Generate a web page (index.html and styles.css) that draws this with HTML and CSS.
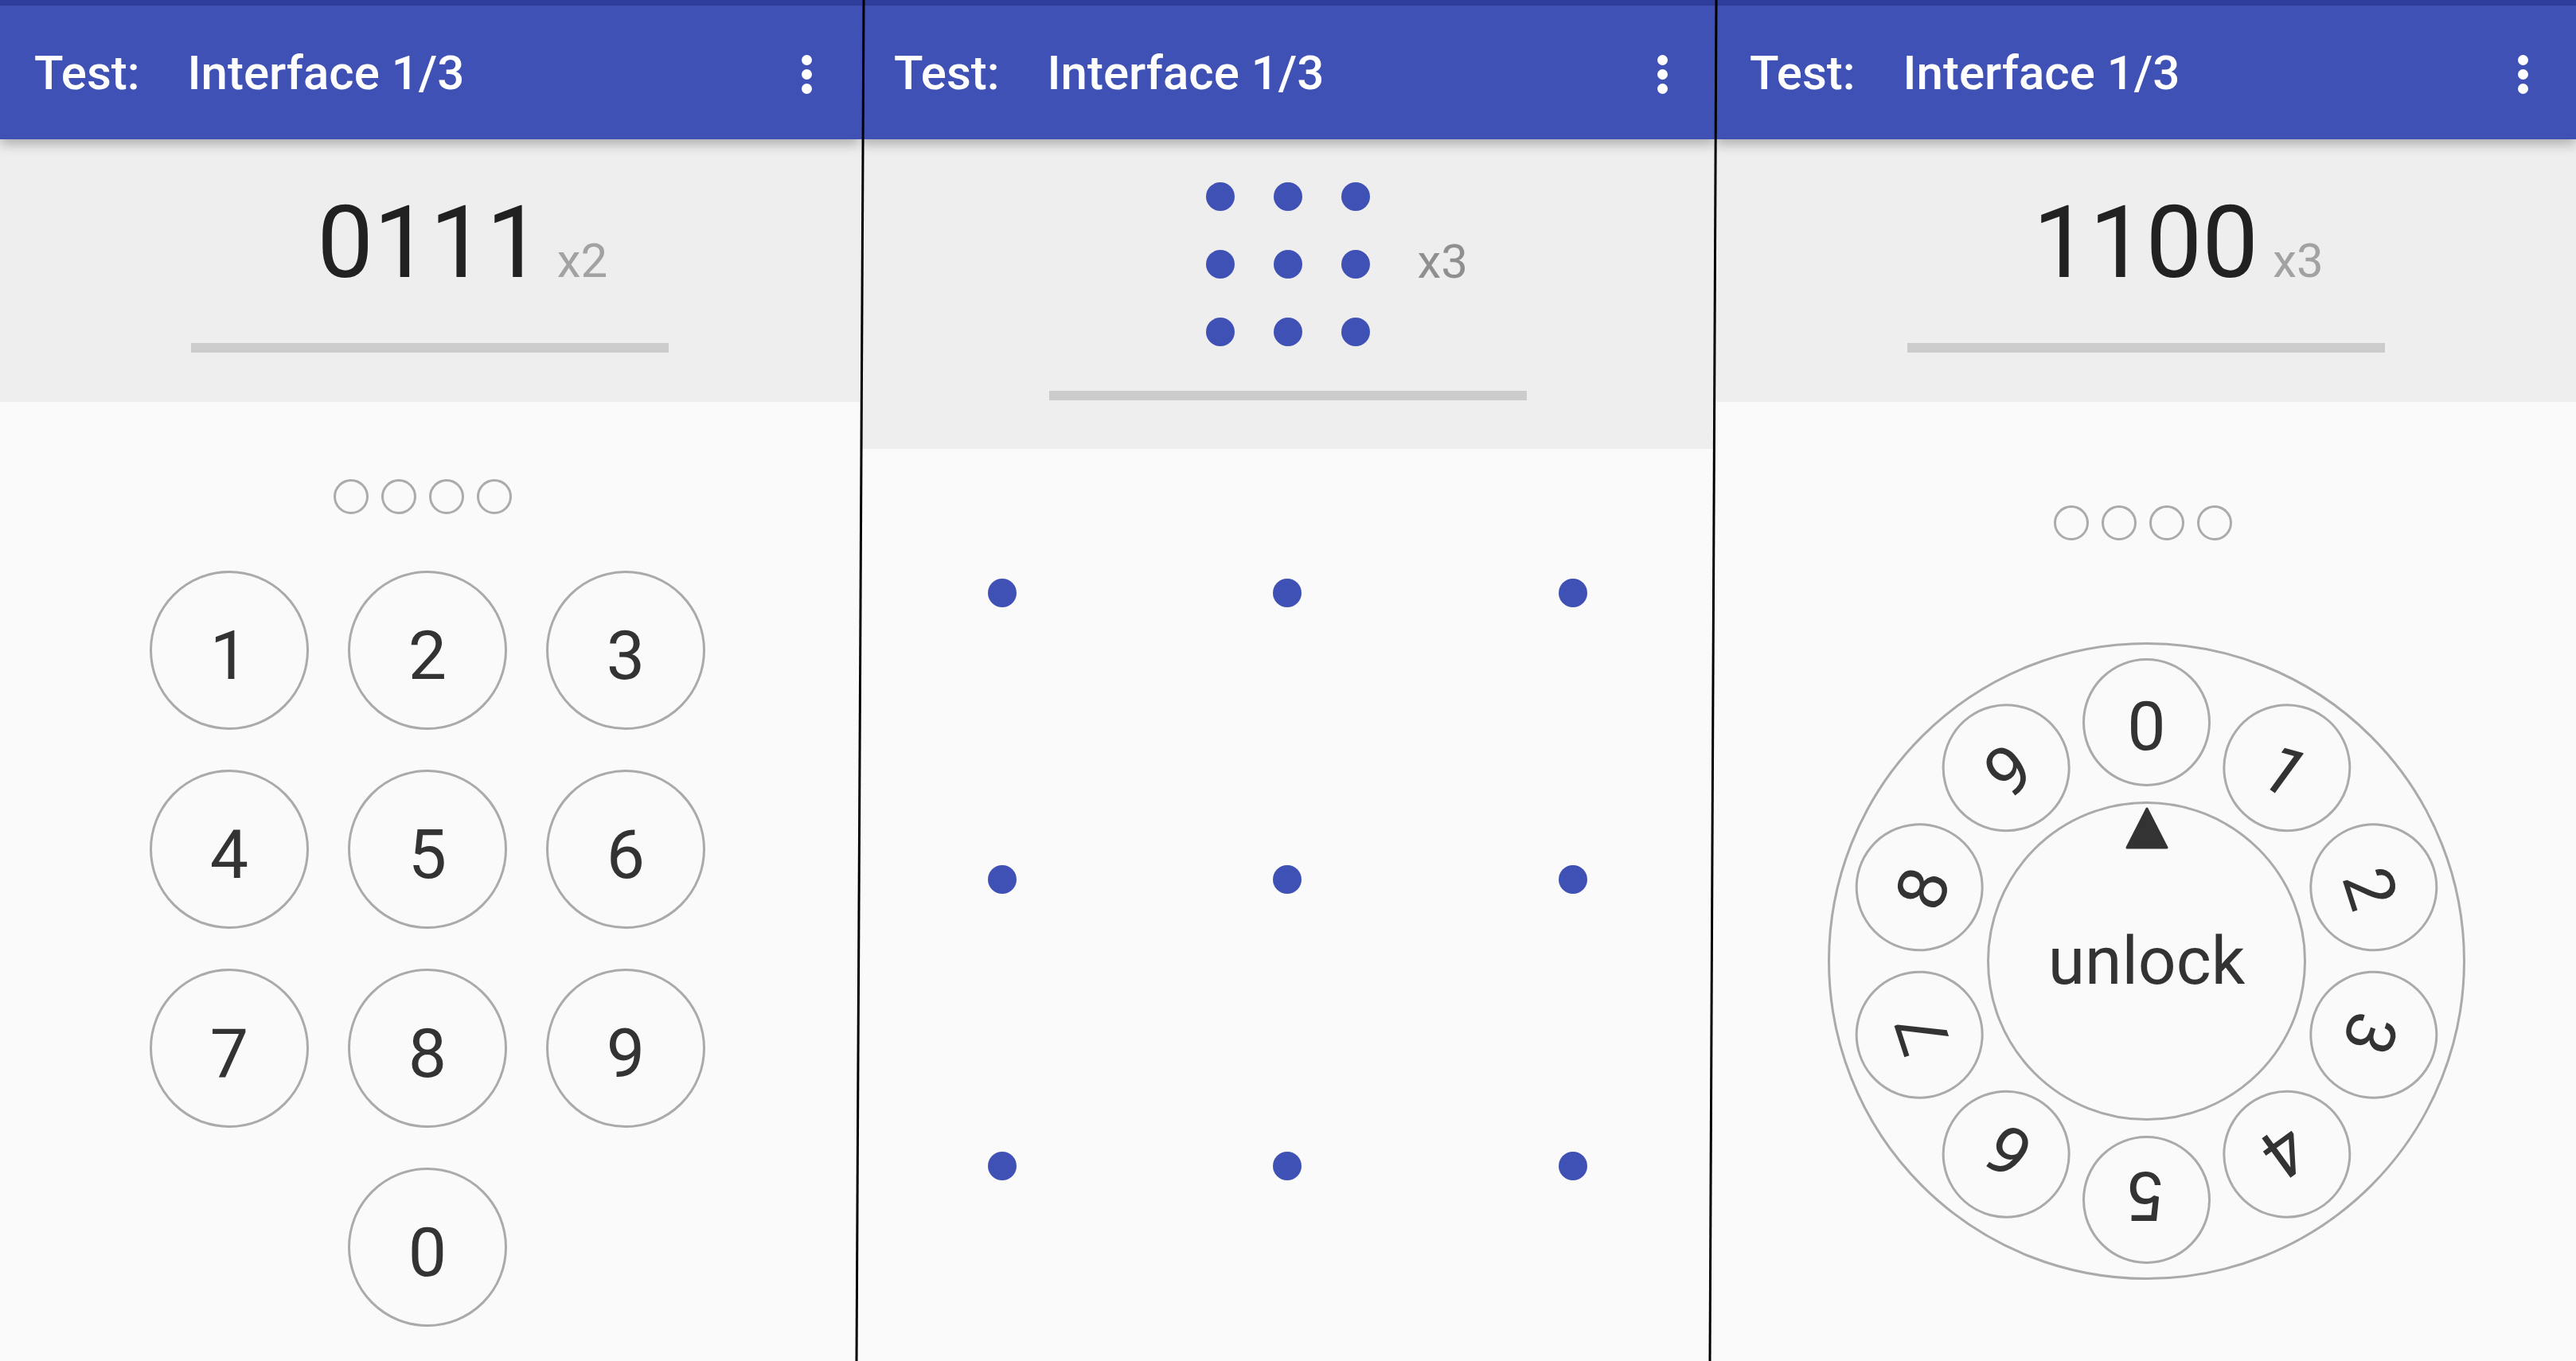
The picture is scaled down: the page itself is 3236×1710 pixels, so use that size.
FILE: index.html
```html
<!DOCTYPE html>
<html lang="en">
<head>
<meta charset="utf-8">
<title>Unlock interfaces</title>
<link rel="stylesheet" href="styles.css">
</head>
<body>
<div class="screen">
  <section class="panel p1">
    <div class="status"></div>
    <header class="toolbar">
      <span class="t-label">Test:</span><span class="t-name">Interface 1/3</span>
      <span class="kebab"><i></i><i></i><i></i></span>
    </header>
    <div class="head head-num">
      <div class="display">
        <span></span><span class="code">0111</span><span class="mult">x2</span>
      </div>
      <div class="bar"></div>
    </div>
    <div class="body body-pin">
      <div class="pin-dots pin-dots-1"><i></i><i></i><i></i><i></i></div>
      <div class="keypad">
        <div class="key">1</div><div class="key">2</div><div class="key">3</div>
        <div class="key">4</div><div class="key">5</div><div class="key">6</div>
        <div class="key">7</div><div class="key">8</div><div class="key">9</div>
        <div class="key key-zero">0</div>
      </div>
    </div>
  </section>

  <section class="panel p2">
    <div class="status"></div>
    <header class="toolbar">
      <span class="t-label">Test:</span><span class="t-name">Interface 1/3</span>
      <span class="kebab"><i></i><i></i><i></i></span>
    </header>
    <div class="head head-pat">
      <div class="display">
        <span></span>
        <div class="pgrid"><i></i><i></i><i></i><i></i><i></i><i></i><i></i><i></i><i></i></div>
        <span class="mult mult-pat">x3</span>
      </div>
      <div class="bar bar-pat"></div>
    </div>
    <div class="body body-pat">
      <div class="pattern">
        <div class="cell"><i></i></div><div class="cell"><i></i></div><div class="cell"><i></i></div>
        <div class="cell"><i></i></div><div class="cell"><i></i></div><div class="cell"><i></i></div>
        <div class="cell"><i></i></div><div class="cell"><i></i></div><div class="cell"><i></i></div>
      </div>
    </div>
  </section>

  <section class="panel p3">
    <div class="status"></div>
    <header class="toolbar">
      <span class="t-label">Test:</span><span class="t-name">Interface 1/3</span>
      <span class="kebab"><i></i><i></i><i></i></span>
    </header>
    <div class="head head-num">
      <div class="display">
        <span></span><span class="code">1100</span><span class="mult">x3</span>
      </div>
      <div class="bar"></div>
    </div>
    <div class="body body-dial">
      <div class="pin-dots pin-dots-3"><i></i><i></i><i></i><i></i></div>
      <div class="dial">
        <div class="inner">
          <svg class="pointer" width="54" height="53" viewBox="0 0 54 53"><polygon points="27,2 52,51 2,51" fill="#333333" stroke="#333333" stroke-width="3" stroke-linejoin="round"/></svg>
          <span>unlock</span>
        </div>
        <div class="dkey d0">0</div>
        <div class="dkey d1">1</div>
        <div class="dkey d2">2</div>
        <div class="dkey d3">3</div>
        <div class="dkey d4">4</div>
        <div class="dkey d5">5</div>
        <div class="dkey d6">6</div>
        <div class="dkey d7">7</div>
        <div class="dkey d8">8</div>
        <div class="dkey d9">9</div>
      </div>
    </div>
  </section>

  <svg class="dividers" width="3236" height="1710" viewBox="0 0 3236 1710">
    <line x1="1085" y1="0" x2="1076" y2="1710" stroke="#000" stroke-width="3"/>
    <line x1="2156" y1="0" x2="2148" y2="1710" stroke="#000" stroke-width="3"/>
  </svg>
</div>
</body>
</html>
```
FILE: styles.css
```css
* { box-sizing: border-box; }

html, body {
  margin: 0;
  padding: 0;
  background: #fafafa;
}

body {
  width: 3236px;
  height: 1710px;
  overflow: hidden;
  font-family: Roboto, "Noto Sans", "Liberation Sans", sans-serif;
}

.screen {
  position: relative;
  display: flex;
  width: 3236px;
  height: 1710px;
}

.panel {
  flex: none;
  display: flex;
  flex-direction: column;
  height: 1710px;
  background: #fafafa;
  overflow: hidden;
}

.p1 { width: 1080px; }
.p2 { width: 1075px; }
.p3 { width: 1081px; }

.status {
  height: 7px;
  background: #303f9f;
}

.toolbar {
  position: relative;
  z-index: 2;
  height: 168px;
  display: flex;
  align-items: center;
  padding: 0 60px 0 43px;
  background: #3f51b5;
  color: #ffffff;
  font-size: 60px;
  font-weight: 500;
  box-shadow: 0 6px 14px rgba(0, 0, 0, 0.28);
}

.t-name {
  flex: 1;
  margin-left: 60px;
}

.kebab {
  display: flex;
  flex-direction: column;
  gap: 5px;
  margin-top: 4px;
}

.kebab i {
  display: block;
  width: 13px;
  height: 13px;
  border-radius: 50%;
  background: #ffffff;
}

/* header (grey) area */
.head {
  display: flex;
  flex-direction: column;
  align-items: center;
  background: #eeeeee;
}

.head-num { padding: 67px 0 62px; }
.head-pat { padding: 54px 0 61px; }

.display {
  width: 100%;
  display: grid;
  grid-template-columns: 1fr auto 1fr;
  align-items: baseline;
}

.code {
  font-size: 126px;
  line-height: 1;
  color: #212121;
}

.mult {
  justify-self: start;
  margin-left: 18px;
  font-size: 60px;
  line-height: 1;
  color: #a2a2a2;
}

.mult-pat {
  align-self: center;
  margin-left: 60px;
  margin-top: -6px;
  color: #8f8f8f;
}

.pgrid {
  display: grid;
  grid-template-columns: repeat(3, 36px);
  gap: 49px;
}

.pgrid i {
  display: block;
  width: 36px;
  height: 36px;
  border-radius: 50%;
  background: #3f51b5;
}

.bar {
  width: 600px;
  height: 12px;
  margin-top: 63px;
  background: #cccccc;
}

.bar-pat { margin-top: 56px; }

/* body area */
.body {
  flex: 1;
  display: flex;
  flex-direction: column;
  align-items: center;
}

.body-pin { padding-top: 97px; }
.body-dial { padding-top: 130px; }
.body-pat { padding-top: 1px; align-items: stretch; }

.pin-dots {
  display: flex;
  gap: 16px;
}

.pin-dots-1 { margin-right: 18px; }
.pin-dots-3 { margin-right: 8px; }

.pin-dots i {
  display: block;
  width: 44px;
  height: 44px;
  border: 3px solid #ababab;
  border-radius: 50%;
}

.keypad {
  margin-top: 71px;
  display: grid;
  grid-template-columns: repeat(3, 200px);
  grid-auto-rows: 200px;
  column-gap: 49px;
  row-gap: 50px;
  margin-right: 6px;
}

.key {
  display: flex;
  align-items: center;
  justify-content: center;
  padding-top: 13px;
  border: 3px solid #aaaaaa;
  border-radius: 50%;
  font-size: 86px;
  color: #333333;
}

.key-zero { grid-column: 2; }

/* pattern */
.pattern {
  display: grid;
  grid-template-columns: repeat(3, 1fr);
  grid-auto-rows: 360px;
}

.cell {
  display: flex;
  align-items: center;
  justify-content: center;
}

.cell i {
  display: block;
  width: 36px;
  height: 36px;
  border-radius: 50%;
  background: #3f51b5;
}

/* rotary dial */
.dial {
  position: relative;
  margin-top: 128px;
  width: 801px;
  height: 801px;
  border: 3px solid #aaaaaa;
  border-radius: 50%;
  display: grid;
  place-items: center;
  margin-left: 2px;
}

.inner {
  position: relative;
  width: 401px;
  height: 401px;
  border: 3px solid #aaaaaa;
  border-radius: 50%;
  display: flex;
  align-items: center;
  justify-content: center;
  font-size: 84px;
  color: #333333;
}

.pointer {
  position: absolute;
  top: 4px;
  left: 50%;
  margin-left: -27px;
}

.dkey {
  position: absolute;
  left: 50%;
  top: 50%;
  width: 161px;
  height: 161px;
  margin: -80.5px 0 0 -80.5px;
  display: flex;
  align-items: center;
  justify-content: center;
  padding-top: 9px;
  border: 3px solid #aaaaaa;
  border-radius: 50%;
  background: #fafafa;
  font-size: 86px;
  color: #333333;
}

.d0 { transform: rotate(0deg) translateY(-300px); }
.d1 { transform: rotate(36deg) translateY(-300px); }
.d2 { transform: rotate(72deg) translateY(-300px); }
.d3 { transform: rotate(108deg) translateY(-300px); }
.d4 { transform: rotate(144deg) translateY(-300px); }
.d5 { transform: rotate(180deg) translateY(-300px); }
.d6 { transform: rotate(216deg) translateY(-300px); }
.d7 { transform: rotate(252deg) translateY(-300px); }
.d8 { transform: rotate(288deg) translateY(-300px); }
.d9 { transform: rotate(324deg) translateY(-300px); }

.dividers {
  position: absolute;
  left: 0;
  top: 0;
  z-index: 5;
  pointer-events: none;
}
```
